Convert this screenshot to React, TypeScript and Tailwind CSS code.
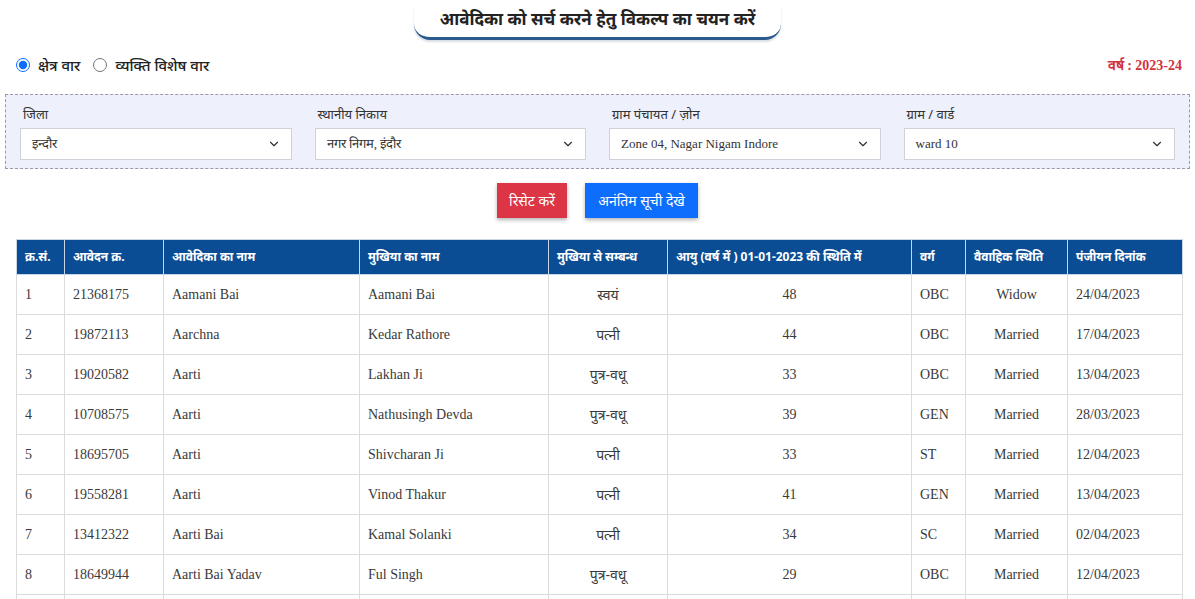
import { ChevronDown } from "lucide-react";

type Row = {
  sn: number;
  appNo: string;
  name: string;
  head: string;
  relation: string;
  age: number;
  category: string;
  marital: string;
  date: string;
};

const rows: Row[] = [
  { sn: 1, appNo: "21368175", name: "Aamani Bai", head: "Aamani Bai", relation: "स्वयं", age: 48, category: "OBC", marital: "Widow", date: "24/04/2023" },
  { sn: 2, appNo: "19872113", name: "Aarchna", head: "Kedar Rathore", relation: "पत्नी", age: 44, category: "OBC", marital: "Married", date: "17/04/2023" },
  { sn: 3, appNo: "19020582", name: "Aarti", head: "Lakhan Ji", relation: "पुत्र-वधू", age: 33, category: "OBC", marital: "Married", date: "13/04/2023" },
  { sn: 4, appNo: "10708575", name: "Aarti", head: "Nathusingh Devda", relation: "पुत्र-वधू", age: 39, category: "GEN", marital: "Married", date: "28/03/2023" },
  { sn: 5, appNo: "18695705", name: "Aarti", head: "Shivcharan Ji", relation: "पत्नी", age: 33, category: "ST", marital: "Married", date: "12/04/2023" },
  { sn: 6, appNo: "19558281", name: "Aarti", head: "Vinod Thakur", relation: "पत्नी", age: 41, category: "GEN", marital: "Married", date: "13/04/2023" },
  { sn: 7, appNo: "13412322", name: "Aarti Bai", head: "Kamal Solanki", relation: "पत्नी", age: 34, category: "SC", marital: "Married", date: "02/04/2023" },
  { sn: 8, appNo: "18649944", name: "Aarti Bai Yadav", head: "Ful Singh", relation: "पुत्र-वधू", age: 29, category: "OBC", marital: "Married", date: "12/04/2023" },
];

const filters = [
  { label: "जिला", value: "इन्दौर" },
  { label: "स्थानीय निकाय", value: "नगर निगम, इंदौर" },
  { label: "ग्राम पंचायत / ज़ोन", value: "Zone 04, Nagar Nigam Indore" },
  { label: "ग्राम / वार्ड", value: "ward 10" },
];

const headers = [
  { label: "क्र.सं.", w: "w-[48px]" },
  { label: "आवेदन क्र.", w: "w-[99px]" },
  { label: "आवेदिका का नाम", w: "w-[196px]" },
  { label: "मुखिया का नाम", w: "w-[189px]" },
  { label: "मुखिया से सम्बन्ध", w: "w-[119px]" },
  { label: "आयु (वर्ष में ) 01-01-2023 की स्थिति में", w: "w-[244px]" },
  { label: "वर्ग", w: "w-[54px]" },
  { label: "वैवाहिक स्थिति", w: "w-[102px]" },
  { label: "पंजीयन दिनांक", w: "w-[115px]" },
];

const serif = "font-['Liberation_Serif','Noto_Serif',serif]";
const sans = "font-['Noto_Sans','Liberation_Sans',sans-serif]";

export default function App() {
  return (
    <div className={`h-[599px] w-[1195px] overflow-hidden bg-white text-[#3a3a3a] ${serif}`}>
      <div className="flex justify-center pt-[6px]">
        <div className="w-[367px] rounded-b-[16px] border-b-[3px] border-[#2b5a8c] pb-[5px] text-center shadow-[0_2px_2px_rgba(60,90,130,0.2)]">
          <span className={`text-[17px] font-bold text-[#222] ${sans}`}>
            आवेदिका को सर्च करने हेतु विकल्प का चयन करें
          </span>
        </div>
      </div>

      <div className="flex items-center justify-between pl-4 pr-[13px] pt-[14px]">
        <div className={`flex items-center text-[15px] font-medium text-[#222] ${sans}`}>
          <label className="flex items-center gap-[8px]">
            <input type="radio" name="mode" defaultChecked className="m-0 h-[14px] w-[14px] accent-[#0d6efd]" />
            क्षेत्र वार
          </label>
          <label className="ml-[13px] flex items-center gap-[8px]">
            <input type="radio" name="mode" className="m-0 h-[14px] w-[14px] accent-[#0d6efd]" />
            व्यक्ति विशेष वार
          </label>
        </div>
        <div className="text-[14px] font-bold text-[#d1333f]">वर्ष : 2023-24</div>
      </div>

      <div className="mx-[5px] mt-[17px] grid grid-cols-4 gap-x-[23px] border border-dashed border-[#9a9aa6] bg-[#eef0fb] px-[14px] pb-[8px] pt-[10px]">
        {filters.map((f) => (
          <div key={f.label} className="flex flex-col">
            <div className={`mb-[4px] pl-[3px] text-[13px] text-[#333] ${sans}`}>{f.label}</div>
            <div className="flex h-[32px] items-center justify-between border border-[#cfd2d8] bg-white pl-[11px] pr-[10px]">
              <span className="text-[13px] text-[#333]">{f.value}</span>
              <ChevronDown className="h-[14px] w-[14px] text-[#333]" strokeWidth={2} />
            </div>
          </div>
        ))}
      </div>

      <div className={`mt-[14px] flex justify-center gap-[18px] text-[14px] text-white ${sans}`}>
        <button className="h-[35px] w-[70px] bg-[#dc3545] shadow-[0_2px_4px_rgba(0,0,0,0.3)]">रिसेट करें</button>
        <button className="h-[35px] w-[113px] bg-[#0d6efd] shadow-[0_2px_4px_rgba(0,0,0,0.3)]">अनंतिम सूची देखे</button>
      </div>

      <div className="mt-[21px] px-4">
        <table className="w-[1166px] table-fixed border-collapse">
          <thead>
            <tr className="h-[35px] bg-[#0b4d94]">
              {headers.map((h) => (
                <th
                  key={h.label}
                  className={`${h.w} border border-[#c9d6e6] px-[8px] text-left text-[12px] font-bold text-white ${sans}`}
                >
                  {h.label}
                </th>
              ))}
            </tr>
          </thead>
          <tbody>
            {rows.map((r) => (
              <tr key={r.sn} className="h-[40px] text-[14px]">
                <td className="border border-[#dcdcdc] px-[8px]">{r.sn}</td>
                <td className="border border-[#dcdcdc] px-[8px]">{r.appNo}</td>
                <td className="border border-[#dcdcdc] px-[8px]">{r.name}</td>
                <td className="border border-[#dcdcdc] px-[8px]">{r.head}</td>
                <td className={`border border-[#dcdcdc] px-[8px] text-center ${sans}`}>{r.relation}</td>
                <td className="border border-[#dcdcdc] px-[8px] text-center">{r.age}</td>
                <td className="border border-[#dcdcdc] px-[8px]">{r.category}</td>
                <td className="border border-[#dcdcdc] px-[8px] text-center">{r.marital}</td>
                <td className="border border-[#dcdcdc] px-[8px]">{r.date}</td>
              </tr>
            ))}
            <tr className="h-[40px]">
              {headers.map((h) => (
                <td key={h.label} className="border border-[#dcdcdc]" />
              ))}
            </tr>
          </tbody>
        </table>
      </div>
    </div>
  );
}
